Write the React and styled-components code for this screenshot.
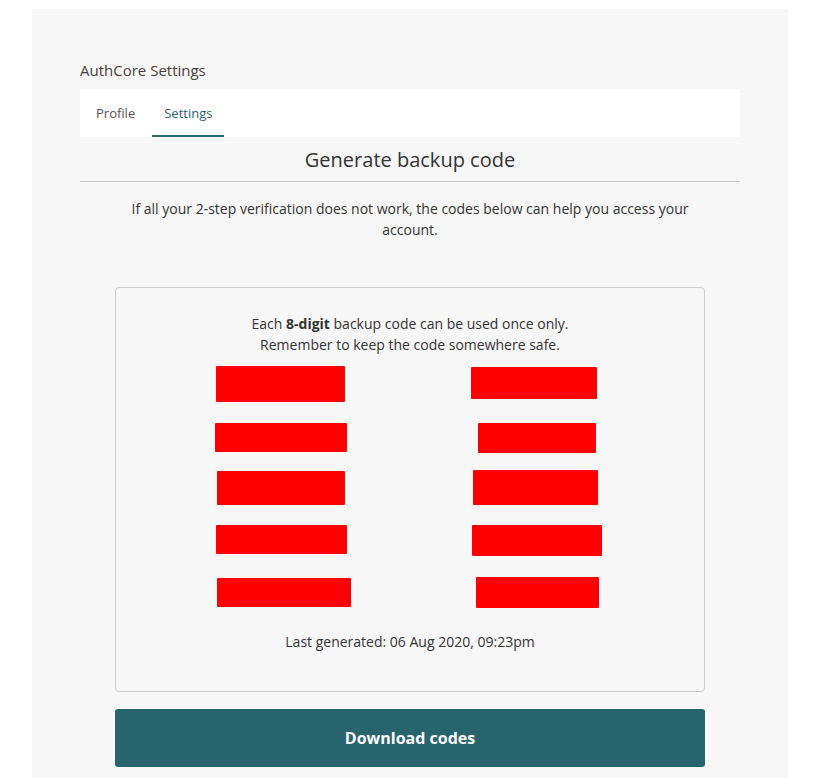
import React from 'react';
import styled, { createGlobalStyle } from 'styled-components';

const GlobalStyle = createGlobalStyle`
    body{
        margin: 0;
        background: #ffffff;
        font-family: "Open Sans", "Noto Sans", sans-serif;
    }
`;

const Page = styled.div`
    padding: 9px 32px 0 32px;
`;

const Panel = styled.div`
    background: #f7f7f7;
    min-height: 769px;
    padding: 51px 48px 0 48px;
    box-sizing: border-box;
`;

const AppTitle = styled.div`
    font-size: 15px;
    line-height: 20px;
    color: #4b3d38;
    margin-bottom: 9px;
`;

const TabBar = styled.div`
    display: flex;
    gap: 5px;
    height: 48px;
    background: #ffffff;
    padding-left: 4px;
`;

const Tab = styled.div`
    display: flex;
    align-items: center;
    padding: 2px 12px 0 12px;
    font-size: 13px;
    color: ${p => p.$active ? '#2b6570' : '#555555'};
    border-bottom: 2px solid ${p => p.$active ? '#2b6570' : 'transparent'};
    box-sizing: border-box;
    cursor: pointer;
`;

const SectionTitle = styled.h2`
    margin: 9px 0 0 0;
    padding-bottom: 7px;
    font-size: 20px;
    line-height: 28px;
    font-weight: 400;
    color: #333333;
    text-align: center;
    border-bottom: 1px solid #c8c8c8;
`;

const Intro = styled.p`
    max-width: 580px;
    margin: 16px auto 47px auto;
    font-size: 14px;
    line-height: 21px;
    color: #333333;
    text-align: center;
`;

const CodeBox = styled.div`
    margin: 0 35px;
    border: 1px solid #cccccc;
    border-radius: 4px;
    padding: 25px 0 39px 0;
    text-align: center;
    font-size: 14px;
    line-height: 21px;
    color: #333333;
`;

const CodeGrid = styled.div`
    display: grid;
    grid-template-columns: 255px 255px;
    grid-auto-rows: 52px;
    justify-content: center;
    margin: 3px 0 13px 0;
`;

const CodeCell = styled.div`
    display: flex;
    align-items: center;
    justify-content: center;
`;

const Redacted = styled.div`
    background: #ff0000;
    width: ${p => p.$w}px;
    height: ${p => p.$h}px;
    margin-left: ${p => p.$dx * 2}px;
    margin-top: ${p => p.$dy * 2}px;
    border-radius: 1px;
`;

const DownloadButton = styled.button`
    display: block;
    width: calc(100% - 70px);
    margin: 17px 35px 0 35px;
    height: 58px;
    border: none;
    border-radius: 3px;
    background: #28646e;
    color: #ffffff;
    font-family: inherit;
    font-size: 16px;
    font-weight: 700;
    cursor: pointer;
`;

const codes = [
    { w: 129, h: 36, dx: -2, dy: 0 }, { w: 126, h: 32, dx: -4, dy: -1 },
    { w: 132, h: 29, dx: -2, dy: 1.5 }, { w: 118, h: 30, dx: -1, dy: 2 },
    { w: 128, h: 34, dx: -2, dy: 0 }, { w: 125, h: 35, dx: -2.5, dy: -0.5 },
    { w: 131, h: 29, dx: -1.5, dy: -0.5 }, { w: 130, h: 31, dx: -1, dy: 0.5 },
    { w: 134, h: 29, dx: 1, dy: 0.5 }, { w: 123, h: 31, dx: -0.5, dy: 0.5 },
];

const App = () => {
    return (
        <Page>
            <GlobalStyle />
            <Panel>
                <AppTitle>AuthCore Settings</AppTitle>
                <TabBar>
                    <Tab>Profile</Tab>
                    <Tab $active>Settings</Tab>
                </TabBar>
                <SectionTitle>Generate backup code</SectionTitle>
                <Intro>If all your 2-step verification does not work, the codes below can help you access your account.</Intro>
                <CodeBox>
                    <div>Each <b>8-digit</b> backup code can be used once only.</div>
                    <div>Remember to keep the code somewhere safe.</div>
                    <CodeGrid>
                        {codes.map((c, i) => (
                            <CodeCell key={'code_' + i}>
                                <Redacted $w={c.w} $h={c.h} $dx={c.dx} $dy={c.dy} />
                            </CodeCell>
                        ))}
                    </CodeGrid>
                    <div>Last generated: 06 Aug 2020, 09:23pm</div>
                </CodeBox>
                <DownloadButton>Download codes</DownloadButton>
            </Panel>
        </Page>
    );
};

export default App;
